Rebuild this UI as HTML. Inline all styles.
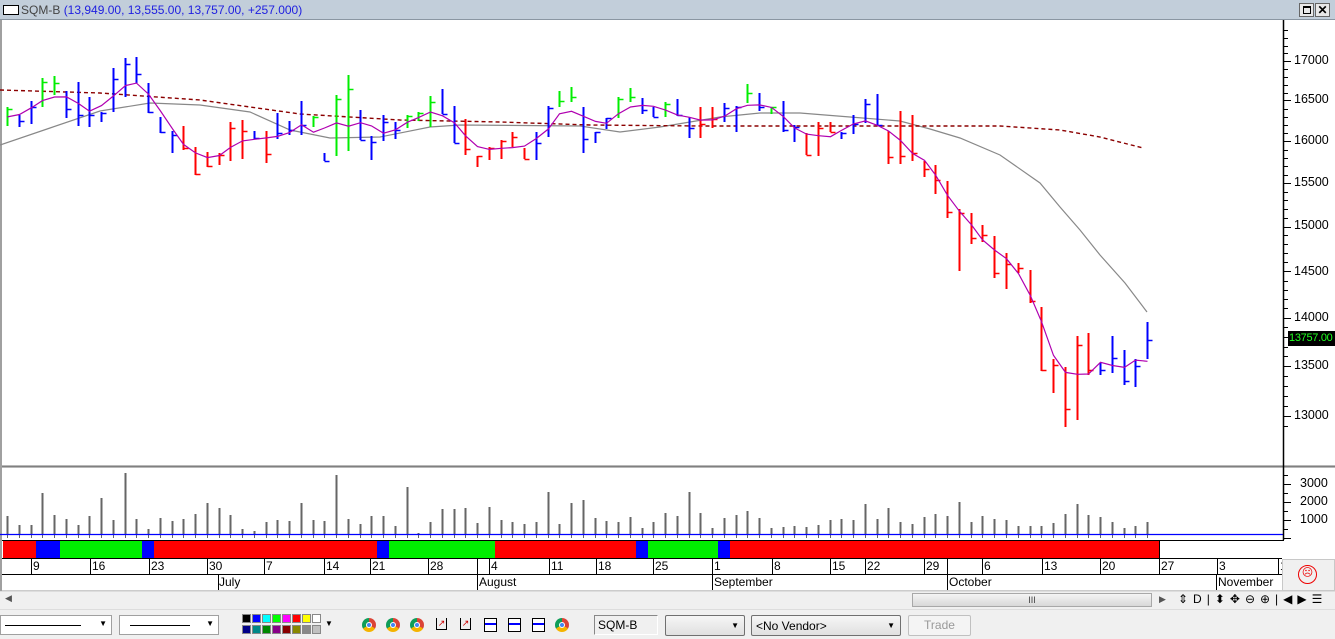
<!DOCTYPE html>
<html><head><meta charset="utf-8">
<style>
*{margin:0;padding:0;box-sizing:border-box}
body{width:1335px;height:639px;overflow:hidden;background:#f0f0f0;font-family:"Liberation Sans",Arial,sans-serif;position:relative}
.a{position:absolute}
.t{font-size:12px;color:#000;white-space:nowrap}
.btn{border:1px solid #a0a0a0;background:#fff;height:20px}
</style></head><body>
<div class="a" style="left:0;top:0;width:1335px;height:20px;background:#c2ceda;border-bottom:1px solid #8a96a2"></div>
<div class="a" style="left:3px;top:5px;width:16px;height:10px;background:#fff;border:1px solid #000"></div>
<div class="a t" style="left:21px;top:3px;font-size:12px"><span style="color:#444">SQM-B</span> <span style="color:#2020e0">(13,949.00, 13,555.00, 13,757.00, +257.000)</span></div>
<div class="a" style="left:1299px;top:3px;width:15px;height:14px;background:#e8e8e8;border:1px solid #666"><div style="margin:2px 3px;width:8px;height:8px;border:1px solid #000;border-top-width:2px"></div></div>
<div class="a" style="left:1315px;top:3px;width:15px;height:14px;background:#e8e8e8;border:1px solid #666;font-size:12px;line-height:12px;text-align:center;font-weight:bold">✕</div>
<div class="a" style="left:0;top:20px;width:1335px;height:571px;background:#fff;border-left:2px solid #a0a0a0"></div>
<svg class="a" id="c" style="left:0;top:0" width="1335" height="639" xmlns="http://www.w3.org/2000/svg"></svg>
<div class="a t" style="left:1294px;top:53px;font-size:12.5px">17000</div>
<div class="a t" style="left:1294px;top:92px;font-size:12.5px">16500</div>
<div class="a t" style="left:1294px;top:133px;font-size:12.5px">16000</div>
<div class="a t" style="left:1294px;top:175px;font-size:12.5px">15500</div>
<div class="a t" style="left:1294px;top:218px;font-size:12.5px">15000</div>
<div class="a t" style="left:1294px;top:264px;font-size:12.5px">14500</div>
<div class="a t" style="left:1294px;top:310px;font-size:12.5px">14000</div>
<div class="a t" style="left:1294px;top:358px;font-size:12.5px">13500</div>
<div class="a t" style="left:1294px;top:408px;font-size:12.5px">13000</div>
<div class="a t" style="left:1288px;top:331px;width:47px;height:15px;background:#000;color:#20ff20;font-size:11px;letter-spacing:-0.3px;padding-left:1px;line-height:15px;overflow:hidden">13757.00</div>
<div class="a t" style="left:1300px;top:476px;font-size:12.5px">3000</div>
<div class="a t" style="left:1300px;top:494px;font-size:12.5px">2000</div>
<div class="a t" style="left:1300px;top:512px;font-size:12.5px">1000</div>
<div id="dates"></div>
<div class="a t" style="left:219px;top:575px">July</div>
<div class="a t" style="left:479px;top:575px">August</div>
<div class="a t" style="left:714px;top:575px">September</div>
<div class="a t" style="left:949px;top:575px">October</div>
<div class="a t" style="left:1218px;top:575px">November</div>
<div class="a" style="left:1282px;top:559px;width:53px;height:32px;background:#f0f0f0;border:1px solid #c8c8c8"></div>
<div class="a" style="left:1298px;top:565px;width:19px;height:19px;border:1.5px solid #e00;border-radius:50%;color:#e00;font-size:11px;text-align:center;line-height:15px">☹</div>
<div class="a" style="left:0;top:591px;width:1335px;height:18px;background:#f0f0f0;border-top:1px solid #ddd"></div>
<div class="a t" style="left:5px;top:593px;font-size:9px;color:#555">◀</div>
<div class="a" style="left:912px;top:593px;width:240px;height:14px;background:linear-gradient(#f4f4f4,#d8d8d8);border:1px solid #a8a8a8;font-size:9px;text-align:center;line-height:12px;color:#444">III</div>
<div class="a t" style="left:1159px;top:594px;font-size:9px;color:#555">▶</div>
<div class="a t" style="left:1178px;top:592px;font-size:12px;letter-spacing:5px">⇕D|⬍✥⊖⊕|◀▶☰</div>
<div class="a" style="left:0;top:609px;width:1335px;height:30px;background:#f0f0f0;border-top:1px solid #ddd"></div>
<div class="a btn" style="left:0;top:615px;width:112px"><div style="position:absolute;left:4px;top:9px;width:76px;border-top:1px solid #000"></div><span style="position:absolute;right:4px;top:3px;font-size:8px">▼</span></div>
<div class="a btn" style="left:119px;top:615px;width:100px"><div style="position:absolute;left:10px;top:9px;width:60px;border-top:1px solid #000"></div><span style="position:absolute;right:4px;top:3px;font-size:8px">▼</span></div>
<div id="pal" class="a" style="left:242px;top:614px"></div>
<div class="a t" style="left:325px;top:619px;font-size:8px">▼</div>
<div id="tb" class="a" style="left:360px;top:615px"></div>
<div class="a" style="left:594px;top:615px;width:64px;height:20px;background:#f0f0f0;border:1px solid #888;border-right-color:#fff;border-bottom-color:#fff;font-size:12px;padding:2px 3px">SQM-B</div>
<div class="a" style="left:665px;top:615px;width:80px;height:21px;background:linear-gradient(#f6f6f6,#e0e0e0);border:1px solid #707070;border-radius:2px"><span style="position:absolute;right:5px;top:5px;font-size:8px">▼</span></div>
<div class="a" style="left:751px;top:615px;width:150px;height:21px;background:linear-gradient(#f6f6f6,#e0e0e0);border:1px solid #707070;border-radius:2px;font-size:12px;padding:3px 4px">&lt;No Vendor&gt;<span style="position:absolute;right:5px;top:5px;font-size:8px">▼</span></div>
<div class="a" style="left:908px;top:615px;width:63px;height:21px;background:#f4f4f4;border:1px solid #c0c0c0;border-radius:2px;font-size:12px;color:#999;text-align:center;line-height:19px">Trade</div>
<script>
var S='';
function L(x1,y1,x2,y2,c,w,extra){S+='<line x1="'+x1+'" y1="'+y1+'" x2="'+x2+'" y2="'+y2+'" stroke="'+c+'" stroke-width="'+(w||1)+'" '+(extra||'')+'/>';}
function R(x,y,w,h,c){S+='<rect x="'+x+'" y="'+y+'" width="'+w+'" height="'+h+'" fill="'+c+'"/>';}
var B='#0000ff',G='#00ee00',Rd='#ff0000';
var bars=[[107,126,109,G],[115,127,121,B],[101,124,107,B],[78,107,82,G],[76,95,83,G],[91,118,109,B],[82,126,115,B],[97,127,115,B],[112,122,113,B],[68,112,79,B],[58,97,64,B],[57,83,74,B],[83,113,112,B],[117,133,132,B],[131,153,135,B],[126,150,148,Rd],[147,175,174,Rd],[152,167,166,Rd],[153,165,155,Rd],[122,161,128,Rd],[120,159,131,Rd],[131,139,138,B],[131,163,154,Rd],[113,139,133,B],[121,135,130,B],[101,135,125,B],[116,127,117,G],[153,161,161,B],[95,156,99,G],[75,151,89,G],[110,140,140,B],[136,160,142,B],[115,141,122,B],[122,139,130,B],[115,128,116,G],[112,121,113,G],[96,127,102,G],[89,114,114,B],[106,143,143,B],[119,155,149,Rd],[156,167,156,Rd],[147,160,148,Rd],[140,159,141,Rd],[132,147,137,Rd],[148,159,159,Rd],[132,160,143,B],[106,137,108,B],[91,107,101,G],[87,102,97,G],[107,153,139,B],[132,143,132,B],[118,129,118,B],[97,118,99,G],[88,102,97,G],[98,114,110,B],[107,117,117,B],[102,117,104,G],[99,116,115,B],[117,138,128,B],[107,138,124,Rd],[107,128,119,Rd],[103,122,108,B],[106,132,107,B],[84,103,93,G],[93,111,107,B],[107,114,107,G],[101,132,130,B],[125,142,127,B],[133,155,155,Rd],[122,156,128,Rd],[122,132,132,Rd],[132,139,133,B],[115,134,124,B],[99,123,104,B],[94,126,125,B],[131,164,157,Rd],[111,164,156,Rd],[115,161,153,Rd],[161,177,169,Rd],[165,194,180,Rd],[181,218,212,Rd],[209,271,213,Rd],[213,244,238,Rd],[225,242,235,Rd],[236,278,273,Rd],[253,289,264,Rd],[263,273,268,Rd],[270,303,301,Rd],[307,371,370,Rd],[359,393,365,Rd],[367,427,409,Rd],[336,420,345,Rd],[333,375,370,Rd],[363,375,370,B],[336,373,358,B],[350,385,381,B],[359,387,366,B],[322,359,340,B]];
var vol=[516,525,525,493,515,519,525,516,498,520,473,519,529,518,521,519,514,503,508,515,529,531,522,520,521,503,520,521,475,519,524,516,516,526,487,533,522,509,509,508,523,507,520,522,524,522,492,524,503,500,518,521,522,517,528,522,513,516,492,513,528,518,515,511,518,528,527,526,527,525,520,519,520,504,519,508,522,524,517,514,516,502,522,516,519,520,526,526,526,523,514,504,515,517,522,528,526,522];
function X(i){return Math.round(7+11.753*i)+0.5;}
S+='<polyline fill="none" stroke="#888" stroke-width="1.2" points="0,145 50,128 100,111 150,103 200,105 250,112 290,130 330,138 380,137 430,127 460,125 580,126 620,132 660,127 720,117 760,113 800,113 850,117 900,121 930,129 960,138 1000,155 1040,183 1060,207 1080,230 1100,255 1125,283 1147,312"/>';
S+='<polyline fill="none" stroke="#8b0000" stroke-width="1.4" stroke-dasharray="4,3" points="0,90 100,93 200,100 300,114 400,120 500,122 590,125 700,126 920,126 1000,126 1060,130 1100,137 1143,148"/>';
bars.forEach(function(b,i){var x=X(i);L(x,b[0],x,b[1],b[3],2);L(x,b[2]+0.5,x+5,b[2]+0.5,b[3],1.5);});
var pts=[];for(var i=0;i<bars.length;i++){var s=0,n=0;for(var j=Math.max(0,i-2);j<=Math.min(bars.length-1,i+1);j++){s+=(bars[j][0]+bars[j][1]+2*bars[j][2])/4;n++;}pts.push(X(i)+','+(s/n).toFixed(1));}
S+='<polyline fill="none" stroke="#b000b0" stroke-width="1.2" points="'+pts.join(' ')+'"/>';
vol.forEach(function(v,i){var x=X(i);L(x,v,x,534,'#666',2);L(x,534,x,538,'#666',1);});
L(0,534.5,1283,534.5,'#0000ff',1.2);
R(2,465,1333,3,'#b8b8b8');L(2,466.5,1335,466.5,'#808080',1);
L(1283.5,20,1283.5,540,'#000',1.5);
var ln17=Math.log(17000);
for(var p=12900;p<=17400;p+=100){var y=Math.round(61+1323*(ln17-Math.log(p)))+0.5;if(y<22||y>462)continue;L(1283,y,p%500==0?1291:1288,y,'#000',1);}
for(var v=0;v<=3500;v+=500){var y=Math.round(538-v*0.018)+0.5;L(1283,y,v%1000==0?1291:1288,y,'#000',1);}
R(2,540,1282,1,'#000');
var seg=[[3,36,Rd],[36,60,B],[60,142,G],[142,154,B],[154,377,Rd],[377,389,B],[389,495,G],[495,636,Rd],[636,648,B],[648,718,G],[718,730,B],[730,1159,Rd]];
seg.forEach(function(s){R(s[0],541,s[1]-s[0],17,s[2]);});
L(1159.5,541,1159.5,558,'#000',1);
L(2,558.5,1282,558.5,'#000',1);L(2,574.5,1282,574.5,'#000',1);L(2,590.5,1335,590.5,'#ccc',1);
var d=[[9,31],[16,90],[23,149],[30,207],[7,264],[14,324],[21,370],[28,428],[4,489],[11,549],[18,596],[25,653],[1,712],[8,772],[15,830],[22,865],[29,924],[6,982],[13,1042],[20,1100],[27,1159],[3,1217],[1,1278]];
var H='';
d.forEach(function(a){L(a[1]+0.5,558,a[1]+0.5,574,'#000',1);H+='<div class="a t" style="left:'+(a[1]+2)+'px;top:559px">'+a[0]+'</div>';});
[477,947].forEach(function(x){L(x+0.5,558,x+0.5,574,'#000',1);});
[218,477,712,947,1216].forEach(function(x){L(x+0.5,574,x+0.5,590,'#000',1);});
document.getElementById('c').innerHTML=S;
document.getElementById('dates').innerHTML=H;
var cols=['#000','#00f','#0ff','#0f0','#f0f','#f00','#ff0','#fff','#008','#088','#080','#808','#800','#880','#888','#c0c0c0'],P='';
cols.forEach(function(c,i){P+='<div class="a" style="left:'+((i%8)*10)+'px;top:'+(Math.floor(i/8)*11)+'px;width:9px;height:9px;background:'+c+';border:1px solid #888"></div>';});
document.getElementById('pal').innerHTML=P;
var T='';
var xs=[0,24,48,73,97,121,145,169,193];
xs.forEach(function(x,i){
 if(i<3||i==8)T+='<div class="a" style="left:'+(x+2)+'px;top:3px;width:14px;height:14px;border-radius:50%;background:conic-gradient(#db4437 0 120deg,#f4b400 120deg 240deg,#0f9d58 240deg);"><div style="margin:4px;width:6px;height:6px;border-radius:50%;background:#4285f4;border:1px solid #fff"></div></div>';
 else if(i<5)T+='<div class="a" style="left:'+(x+3)+'px;top:3px;width:11px;height:12px;border:1px solid #000;border-top:none;font-size:9px;color:#c00;line-height:10px;text-align:center">↗</div>';
 else T+='<div class="a" style="left:'+(x+3)+'px;top:3px;width:13px;height:14px;border:1px solid #000;background:#fff"><div style="margin-top:4px;border-top:2px solid #00f"></div></div>';
});
document.getElementById('tb').innerHTML=T;
</script>
</body></html>
